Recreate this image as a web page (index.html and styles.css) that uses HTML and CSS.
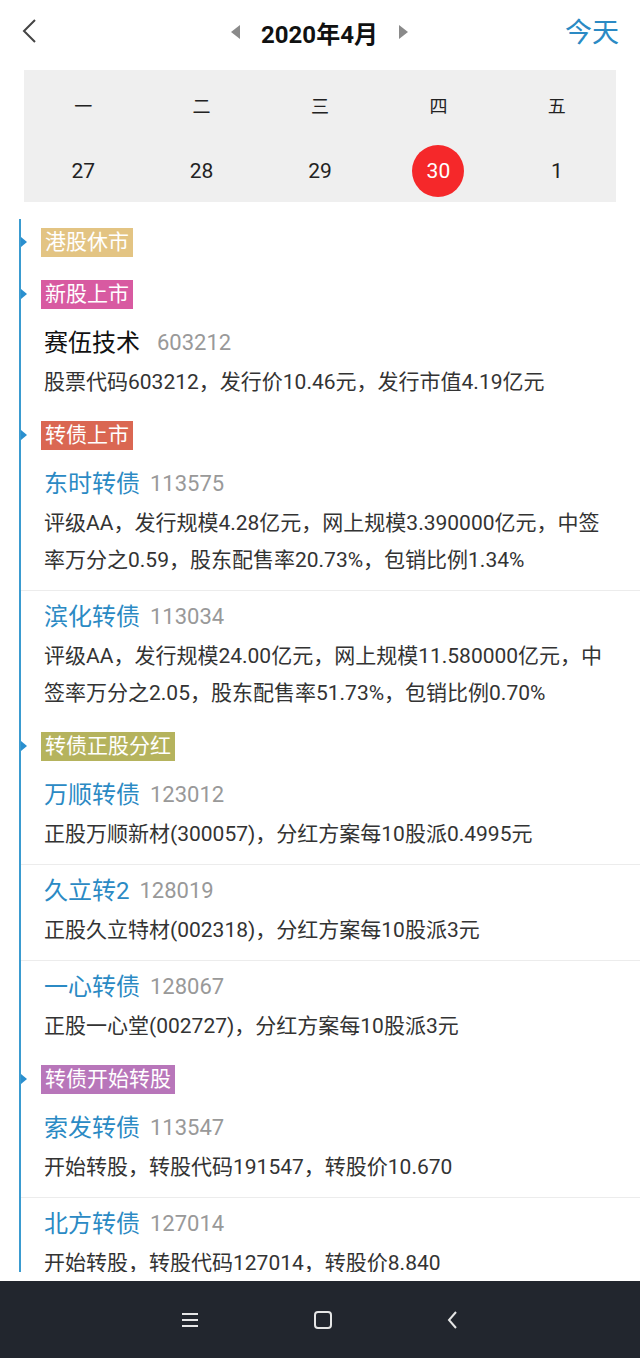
FILE: index.html
```html
<!DOCTYPE html>
<html lang="zh-CN">
  <head>
    <meta charset="UTF-8" />
    <meta name="viewport" content="width=device-width, initial-scale=1.0" />
    <title>日历</title>
    <link rel="stylesheet" href="styles.css">
  </head>

  <body>
    <div class="page">
      <!-- header -->
      <header class="topbar">
        <svg class="back" width="18" height="26" viewBox="0 0 18 26">
          <path d="M15 2 L4 13 L15 24" fill="none" stroke="#444" stroke-width="2" />
        </svg>
        <div class="month">
          <span class="tri tri-left"></span>
          <h1>2020年4月</h1>
          <span class="tri tri-right"></span>
        </div>
        <a class="today">今天</a>
      </header>

      <!-- week strip -->
      <div class="calendar">
        <div class="wd">一</div>
        <div class="wd">二</div>
        <div class="wd">三</div>
        <div class="wd">四</div>
        <div class="wd">五</div>
        <div class="day"><span>27</span></div>
        <div class="day"><span>28</span></div>
        <div class="day"><span>29</span></div>
        <div class="day"><span class="active">30</span></div>
        <div class="day"><span>1</span></div>
      </div>

      <!-- events -->
      <div class="timeline">
        <section class="group empty">
          <span class="tag tag-hk">港股休市</span>
        </section>

        <section class="group">
          <span class="tag tag-ipo">新股上市</span>
          <div class="item">
            <div class="title plain">赛伍技术<span class="code wide">603212</span></div>
            <p class="desc">股票代码603212，发行价10.46元，发行市值4.19亿元</p>
          </div>
        </section>

        <section class="group">
          <span class="tag tag-bond">转债上市</span>
          <div class="item">
            <div class="title">东时转债<span class="code">113575</span></div>
            <p class="desc">评级AA，发行规模4.28亿元，网上规模3.390000亿元，中签率万分之0.59，股东配售率20.73%，包销比例1.34%</p>
          </div>
          <div class="item">
            <div class="title">滨化转债<span class="code">113034</span></div>
            <p class="desc">评级AA，发行规模24.00亿元，网上规模11.580000亿元，中签率万分之2.05，股东配售率51.73%，包销比例0.70%</p>
          </div>
        </section>

        <section class="group">
          <span class="tag tag-div">转债正股分红</span>
          <div class="item">
            <div class="title">万顺转债<span class="code">123012</span></div>
            <p class="desc">正股万顺新材(300057)，分红方案每10股派0.4995元</p>
          </div>
          <div class="item">
            <div class="title">久立转2<span class="code">128019</span></div>
            <p class="desc">正股久立特材(002318)，分红方案每10股派3元</p>
          </div>
          <div class="item">
            <div class="title">一心转债<span class="code">128067</span></div>
            <p class="desc">正股一心堂(002727)，分红方案每10股派3元</p>
          </div>
        </section>

        <section class="group">
          <span class="tag tag-conv">转债开始转股</span>
          <div class="item">
            <div class="title">索发转债<span class="code">113547</span></div>
            <p class="desc">开始转股，转股代码191547，转股价10.670</p>
          </div>
          <div class="item">
            <div class="title">北方转债<span class="code">127014</span></div>
            <p class="desc">开始转股，转股代码127014，转股价8.840</p>
          </div>
        </section>
      </div>
    </div>

    <!-- system nav -->
    <nav class="navbar">
      <svg width="20" height="18" viewBox="0 0 20 18">
        <path d="M2 3 H18 M2 9 H18 M2 15 H18" stroke="#e6e6e6" stroke-width="2" />
      </svg>
      <svg width="20" height="20" viewBox="0 0 20 20">
        <rect x="2" y="2" width="16" height="16" rx="3" fill="none" stroke="#e6e6e6" stroke-width="2" />
      </svg>
      <svg width="14" height="20" viewBox="0 0 14 20">
        <path d="M10 2 L3 10 L10 18" fill="none" stroke="#e6e6e6" stroke-width="2" />
      </svg>
    </nav>
  </body>
</html>
```

FILE: styles.css
```css
* {
  margin: 0px;
  padding: 0px;
  box-sizing: border-box;
}

body {
  font-family: Roboto, "Noto Sans CJK SC", sans-serif;
  width: 640px;
  height: 1358px;
  display: flex;
  flex-direction: column;
  overflow: hidden;
  background-color: white;
  color: #333;
}

.page {
  flex: 1;
  min-height: 0;
  display: flex;
  flex-direction: column;
  padding-bottom: 9px;
}

/* header */
.topbar {
  height: 64px;
  flex-shrink: 0;
  display: grid;
  grid-template-columns: 1fr auto 1fr;
  align-items: center;
  padding: 0 21px 0 20px;
}

.back {
  margin-top: -2px;
}

.month {
  display: flex;
  align-items: center;
  gap: 21px;
}

.month h1 {
  font-size: 24px;
  font-weight: bold;
  color: #111;
}

.tri {
  width: 0;
  height: 0;
  border-top: 7px solid transparent;
  border-bottom: 7px solid transparent;
}

.tri-left {
  border-right: 9px solid #8a8a8a;
}

.tri-right {
  border-left: 9px solid #8a8a8a;
}

.today {
  justify-self: end;
  font-size: 27px;
  color: #2b8ac4;
  margin-top: -3px;
}

/* calendar */
.calendar {
  flex-shrink: 0;
  margin: 6px 24px 0;
  background-color: #efefef;
  display: grid;
  grid-template-columns: repeat(5, 1fr);
  grid-template-rows: 70px 62px;
}

.wd,
.day {
  display: flex;
  align-items: center;
  justify-content: center;
  color: #222;
}

.wd {
  font-size: 18px;
}

.day span {
  width: 52px;
  height: 52px;
  border-radius: 50%;
  display: flex;
  align-items: center;
  justify-content: center;
  font-size: 21px;
}

.day .active {
  background-color: #f5282a;
  color: white;
}

/* timeline */
.timeline {
  flex: 1;
  min-height: 0;
  overflow: hidden;
  margin: 17px 0 0 19px;
  border-left: 2px solid #3a9bd0;
}

.group {
  position: relative;
  padding-top: 9px;
}

.group.empty {
  padding-bottom: 8px;
}

.group::before {
  content: "";
  position: absolute;
  left: 0;
  top: 18px;
  border-left: 6px solid #2a8fcf;
  border-top: 5px solid transparent;
  border-bottom: 5px solid transparent;
}

.tag {
  display: inline-block;
  height: 29px;
  line-height: 29px;
  margin: 0 0 6px 20px;
  padding: 0 4px;
  font-size: 21px;
  color: white;
  vertical-align: top;
}

.tag-hk {
  background-color: #e3c483;
}

.tag-ipo {
  background-color: #d85aa1;
}

.tag-bond {
  background-color: #da6752;
}

.tag-div {
  background-color: #b5b35d;
}

.tag-conv {
  background-color: #b876ba;
}

.item {
  padding: 10px 24px 11px 23px;
}

.item + .item {
  padding-top: 8px;
  border-top: 1px solid #ececec;
}

.title {
  height: 36px;
  display: flex;
  align-items: center;
  font-size: 24px;
  line-height: 1;
  margin-bottom: 3px;
  color: #2b8ac4;
}

.title.plain {
  color: #111;
}

.code {
  font-size: 22px;
  color: #999;
  margin-left: 10px;
}

.code.wide {
  margin-left: 17px;
}

.desc {
  font-size: 21px;
  line-height: 37px;
  color: #333;
}

/* system nav */
.navbar {
  height: 77px;
  flex-shrink: 0;
  background-color: #22262e;
  display: flex;
  align-items: center;
  justify-content: center;
  gap: 113px;
}
```
